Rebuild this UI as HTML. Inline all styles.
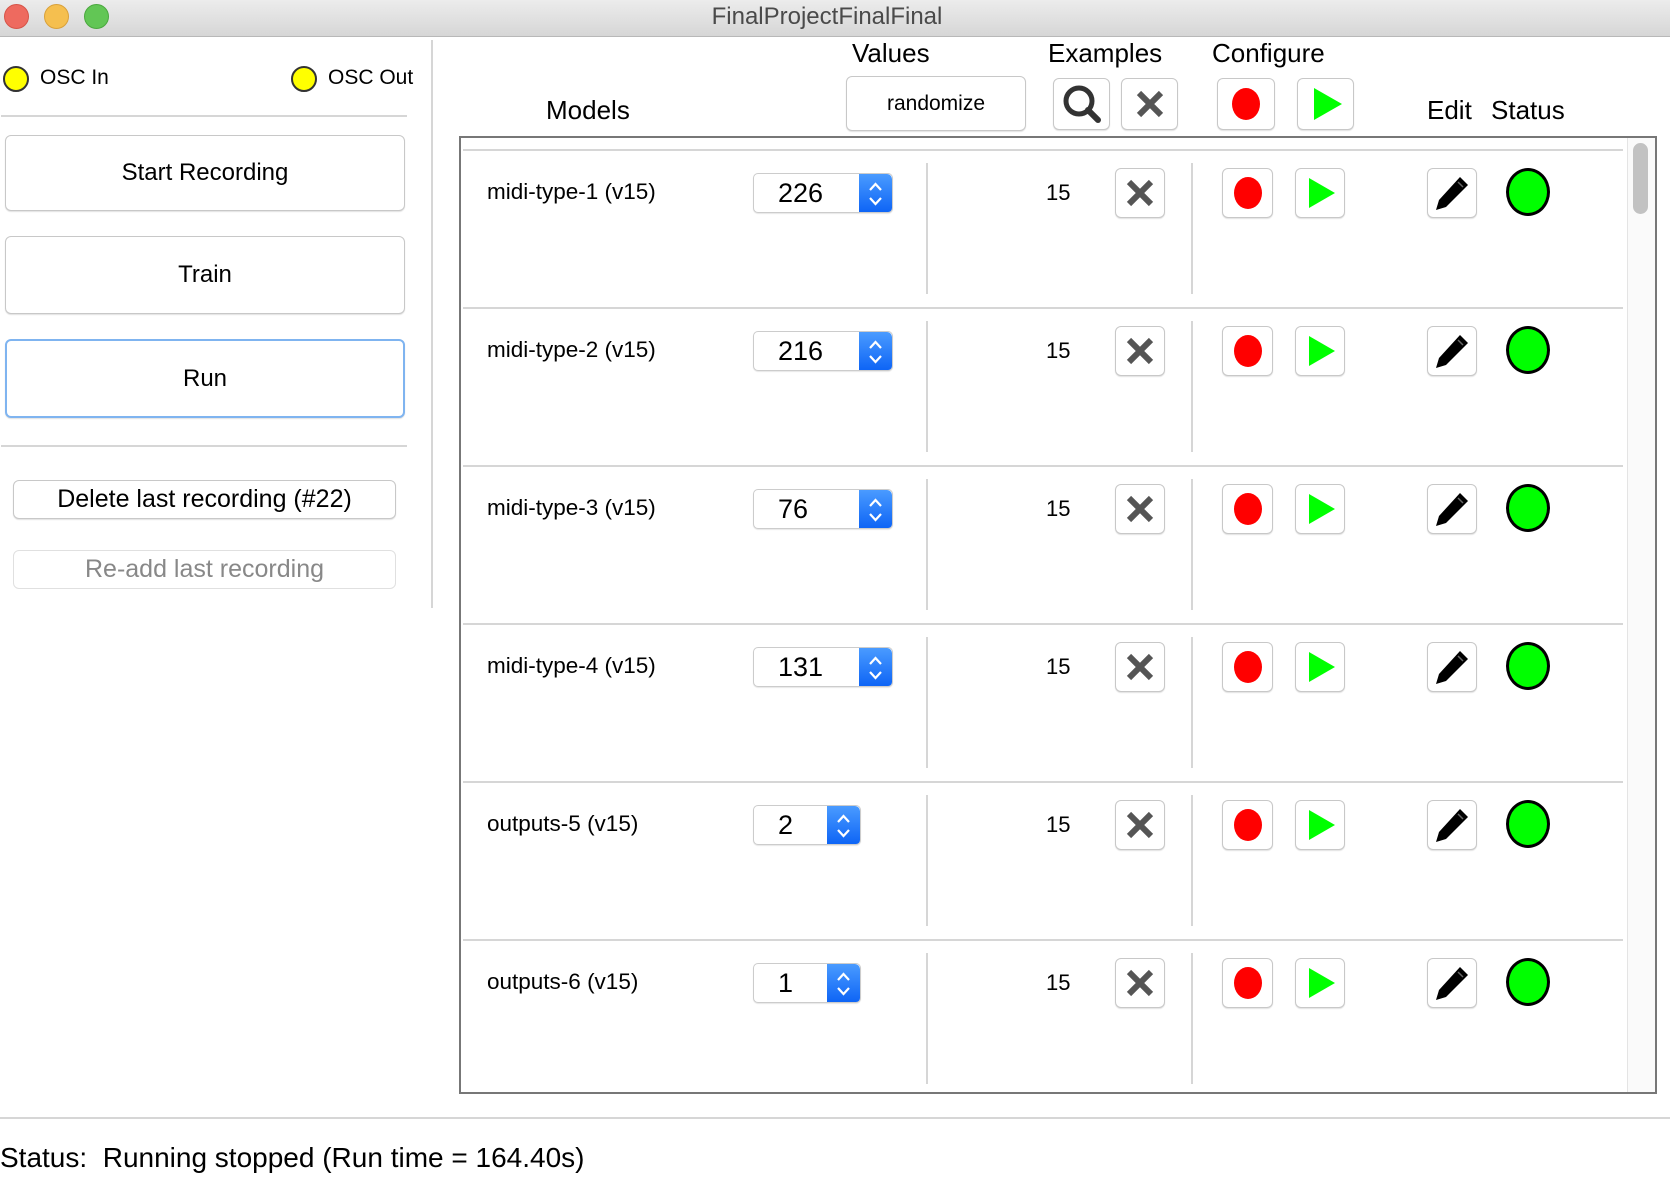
<!DOCTYPE html>
<html><head><meta charset="utf-8"><style>
*{box-sizing:border-box;margin:0;padding:0}
body{width:1670px;height:1182px;background:#fff;position:relative;overflow:hidden;font-family:"Liberation Sans","DejaVu Sans",sans-serif;color:#000}
.a{position:absolute}
.btn{position:absolute;background:#fff;border:1px solid #c8c8c8;border-radius:6px;box-shadow:0 1px 1px rgba(0,0,0,.12);display:flex;align-items:center;justify-content:center}
.t{position:absolute;white-space:nowrap}
.led{position:absolute;width:26px;height:26px;border-radius:50%;background:#ff0;border:2px solid #333}
.hl{position:absolute;height:2px;background:#d6d6d6}
.vl{position:absolute;width:2px;background:#d6d6d6}
.rec{width:22px;height:26px;border-radius:50%;background:#f00}
.play{width:0;height:0;border-left:26px solid #0f0;border-top:15px solid transparent;border-bottom:15px solid transparent;margin-left:4px}
.st{position:absolute;width:44px;height:48px;border-radius:50%;background:#0f0;border:3px solid #000}
.spin{position:absolute;height:40px;border:1px solid #ccc;border-radius:5px;background:#fff;box-shadow:0 1px 1px rgba(0,0,0,.1);font-size:27px;padding-left:24px;line-height:38px;overflow:hidden}
.spin b{position:absolute;right:0;top:0;width:33px;height:40px;background:linear-gradient(#4a9bff,#0b62f5);border-radius:0 5px 5px 0}
</style></head><body>
<div class="a" style="left:0;top:0;width:1670px;height:37px;background:linear-gradient(#ececec,#d6d6d6);border-bottom:1px solid #b8b8b8"></div>
<div class="a" style="left:4px;top:4px;width:25px;height:25px;border-radius:50%;background:#ee6a5f;border:1px solid #d65448"></div>
<div class="a" style="left:44px;top:4px;width:25px;height:25px;border-radius:50%;background:#f5bf4f;border:1px solid #d9a13a"></div>
<div class="a" style="left:84px;top:4px;width:25px;height:25px;border-radius:50%;background:#62c655;border:1px solid #4aa83e"></div>
<div class="t" style="left:0;width:1654px;top:3px;text-align:center;font-size:24px;color:#4a4a4a">FinalProjectFinalFinal</div>

<div class="led" style="left:3px;top:66px"></div>
<div class="t" style="left:40px;top:66px;font-size:21px">OSC In</div>
<div class="led" style="left:291px;top:66px"></div>
<div class="t" style="left:328px;top:66px;font-size:21px">OSC Out</div>
<div class="hl" style="left:1px;top:115px;width:406px"></div>
<div class="btn" style="left:5px;top:135px;width:400px;height:76px;font-size:24px">Start Recording</div>
<div class="btn" style="left:5px;top:236px;width:400px;height:78px;font-size:24px">Train</div>
<div class="btn" style="left:5px;top:339px;width:400px;height:79px;font-size:24px;border:2px solid #7fb4f0">Run</div>
<div class="hl" style="left:1px;top:445px;width:406px"></div>
<div class="btn" style="left:13px;top:480px;width:383px;height:39px;font-size:25px">Delete last recording (#22)</div>
<div class="btn" style="left:13px;top:550px;width:383px;height:39px;font-size:25px;color:#888;box-shadow:none;border-color:#e0e0e0">Re-add last recording</div>
<div class="vl" style="left:431px;top:40px;height:568px"></div>

<div class="t" style="left:852px;top:38px;font-size:26px">Values</div>
<div class="t" style="left:1048px;top:38px;font-size:26px">Examples</div>
<div class="t" style="left:1212px;top:38px;font-size:26px">Configure</div>
<div class="t" style="left:546px;top:95px;font-size:26px">Models</div>
<div class="t" style="left:1427px;top:95px;font-size:26px">Edit</div>
<div class="t" style="left:1491px;top:95px;font-size:26px">Status</div>
<div class="btn" style="left:846px;top:76px;width:180px;height:55px;font-size:21px">randomize</div>
<div class="btn" style="left:1053px;top:78px;width:57px;height:52px"><svg width="44" height="44" viewBox="0 0 44 44"><circle cx="19" cy="19" r="13" fill="none" stroke="#333" stroke-width="5"/><path d="M28 28l10 10" stroke="#333" stroke-width="6" stroke-linecap="round"/></svg></div>
<div class="btn" style="left:1121px;top:78px;width:57px;height:52px"><svg width="30" height="30" viewBox="0 0 30 30"><path d="M4 4l22 22M26 4L4 26" stroke="#555" stroke-width="6"/></svg></div>
<div class="btn" style="left:1217px;top:78px;width:58px;height:52px"><div class="rec" style="width:28px;height:32px"></div></div>
<div class="btn" style="left:1297px;top:78px;width:57px;height:52px"><div class="play" style="border-left-width:28px;border-top-width:16px;border-bottom-width:16px"></div></div>

<div class="a" style="left:459px;top:136px;width:1198px;height:958px;border:2px solid #777"></div>
<div class="a" style="left:1627px;top:138px;width:28px;height:954px;background:#fafafa;border-left:1px solid #e4e4e4"></div>
<div class="a" style="left:1633px;top:143px;width:15px;height:71px;background:#c2c2c2;border-radius:8px"></div>
<div class="hl" style="left:463px;top:149px;width:1160px"></div>

<div id="rows"></div>

<div class="hl" style="left:0;top:1117px;width:1670px"></div>
<div class="t" style="left:0;top:1142px;font-size:28px">Status:&nbsp; Running stopped (Run time = 164.40s)</div>

<script>
var rows=[["midi-type-1 (v15)","226",140],["midi-type-2 (v15)","216",140],["midi-type-3 (v15)","76",140],["midi-type-4 (v15)","131",140],["outputs-5 (v15)","2",108],["outputs-6 (v15)","1",108]];
var h="";
rows.forEach(function(r,i){
 var y=150+i*158;
 h+='<div class="t" style="left:487px;top:'+(y+29)+'px;font-size:22.5px">'+r[0]+'</div>';
 h+='<div class="spin" style="left:753px;top:'+(y+23)+'px;width:'+r[2]+'px">'+r[1]+'<b><svg width="33" height="40" viewBox="0 0 33 40"><path d="M11 16l5.5-6 5.5 6M11 24l5.5 6 5.5-6" fill="none" stroke="#fff" stroke-width="2.2"/></svg></b></div>';
 h+='<div class="vl" style="left:926px;top:'+(y+13)+'px;height:131px"></div>';
 h+='<div class="vl" style="left:1191px;top:'+(y+13)+'px;height:131px"></div>';
 h+='<div class="t" style="left:1046px;top:'+(y+30)+'px;font-size:22px">15</div>';
 h+='<div class="btn" style="left:1115px;top:'+(y+18)+'px;width:50px;height:50px"><svg width="30" height="30" viewBox="0 0 30 30"><path d="M4 4l22 22M26 4L4 26" stroke="#555" stroke-width="6"/></svg></div>';
 h+='<div class="btn" style="left:1222px;top:'+(y+18)+'px;width:51px;height:50px"><div class="rec" style="width:28px;height:32px"></div></div>';
 h+='<div class="btn" style="left:1295px;top:'+(y+18)+'px;width:50px;height:50px"><div class="play"></div></div>';
 h+='<div class="btn" style="left:1427px;top:'+(y+18)+'px;width:50px;height:50px"><svg width="40" height="40" viewBox="0 0 40 40"><path d="M28 4l8 8L14 34l-10 3 3-10z" fill="#000"/><path d="M26 9l5 5" stroke="#666" stroke-width="1.5"/></svg></div>';
 h+='<div class="st" style="left:1506px;top:'+(y+18)+'px"></div>';
 if(i<5) h+='<div class="hl" style="left:463px;top:'+(y+157)+'px;width:1160px"></div>';
});
document.getElementById("rows").innerHTML=h;
</script>
</body></html>
